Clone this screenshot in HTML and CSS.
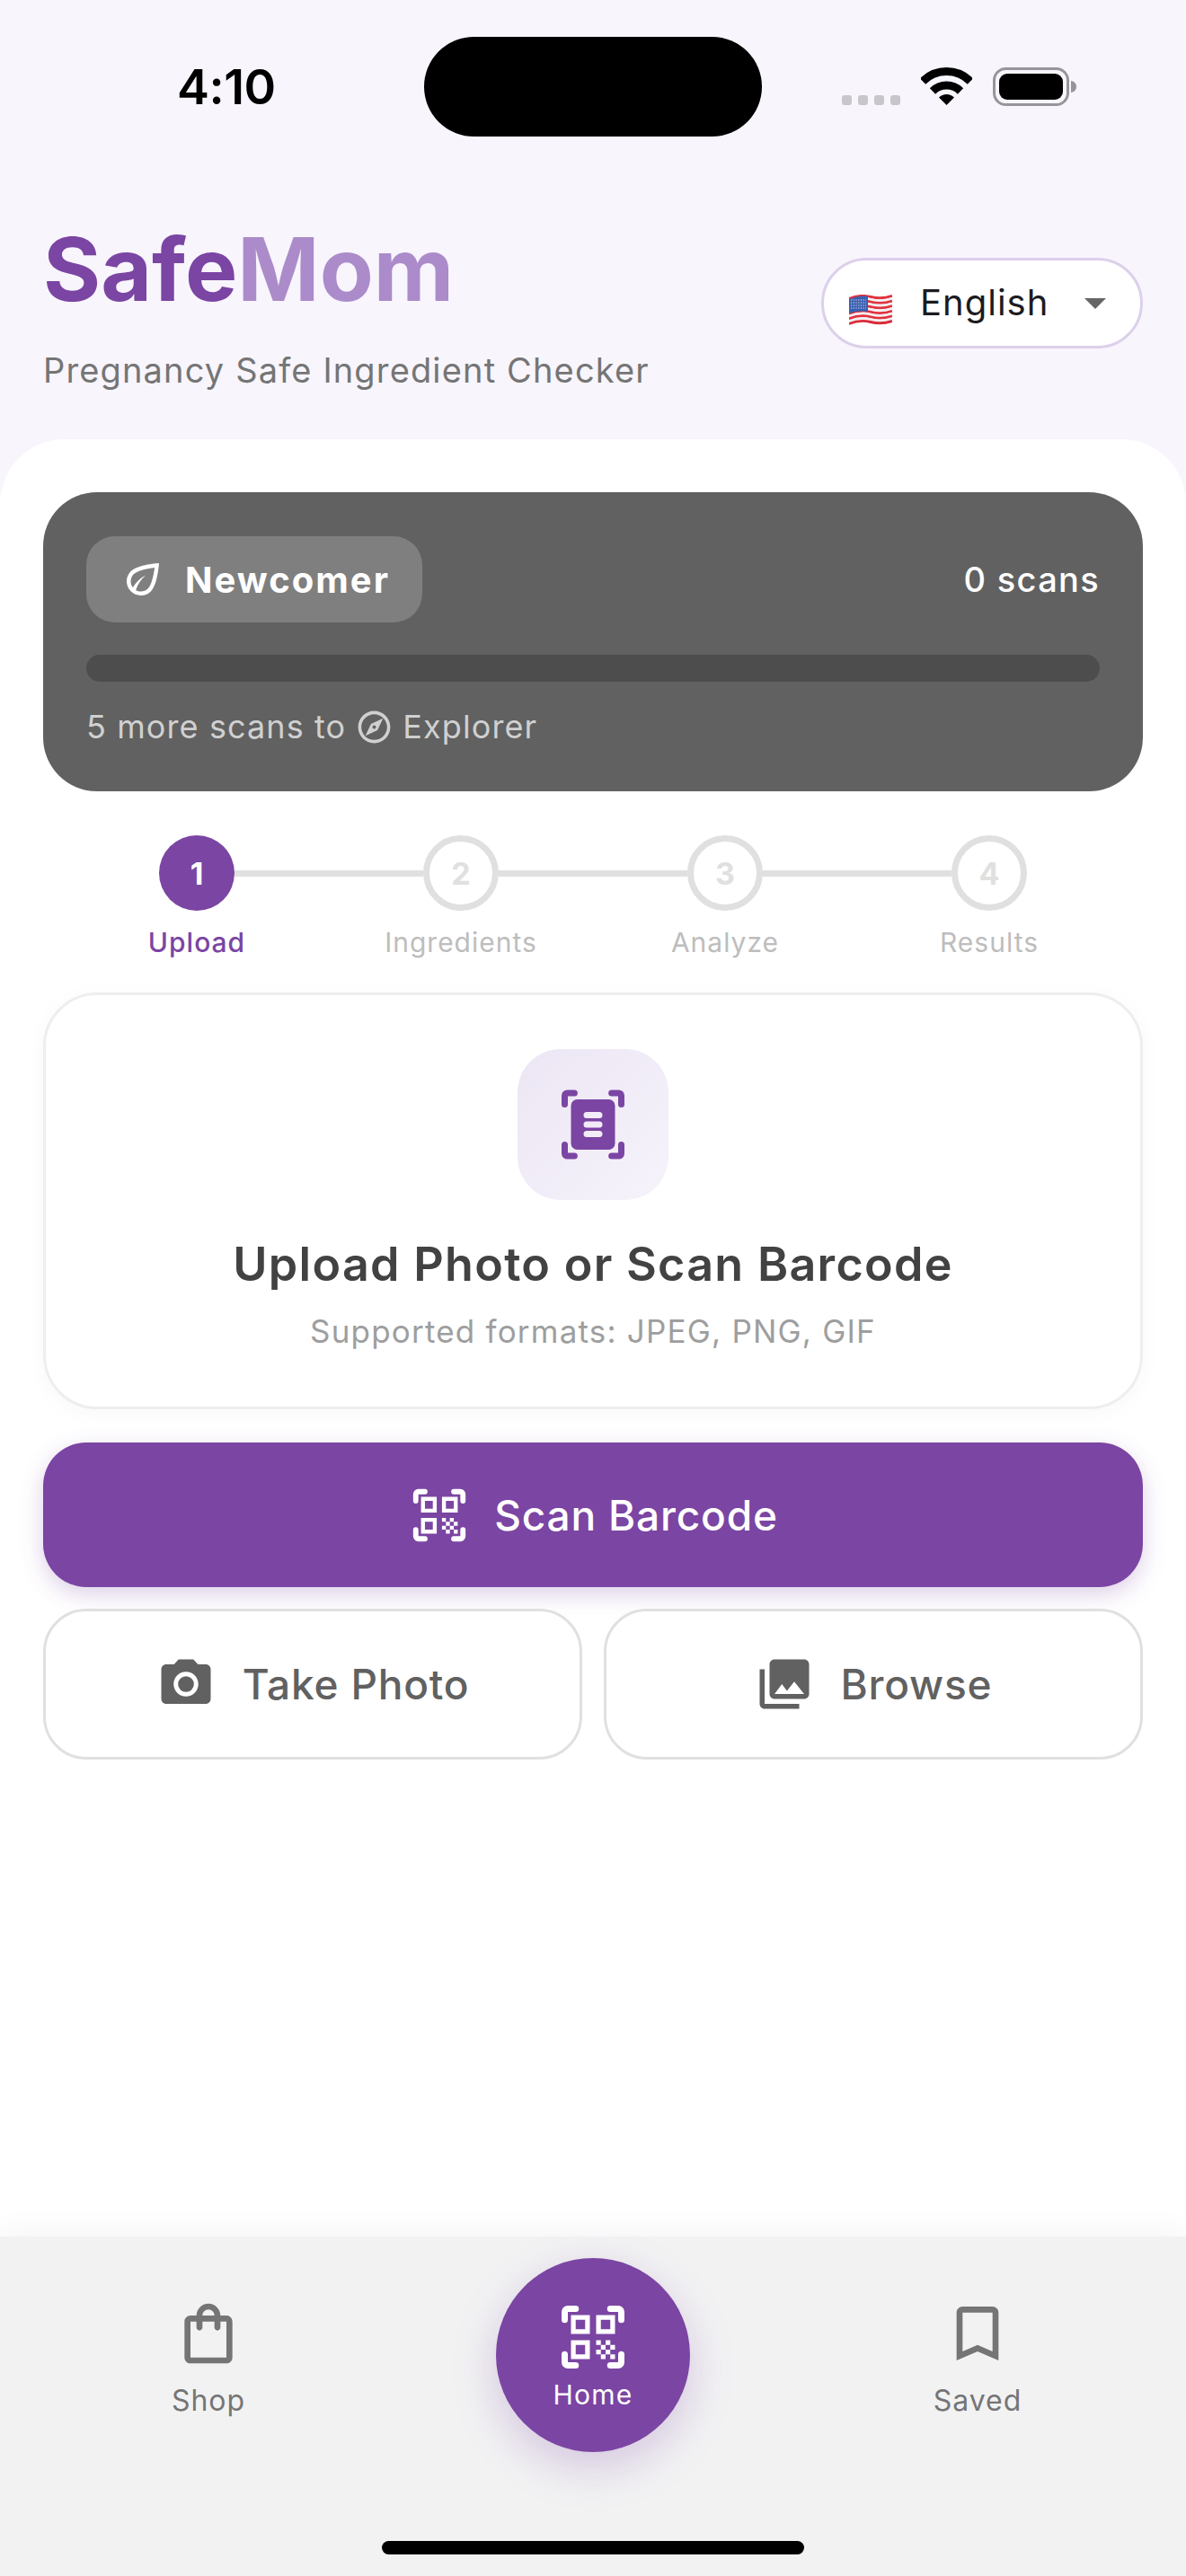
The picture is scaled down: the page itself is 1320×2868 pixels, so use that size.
FILE: index.html
```html
<!DOCTYPE html>
<html lang="en">
<head>
    <meta charset="utf-8">
    <title>SafeMom</title>
    <link rel="stylesheet" href="styles.css">
</head>
<body>
<div class="page">

    <div class="status-bar">
        <span class="time">4:10</span>
        <div class="island"></div>
        <div class="status-icons">
            <div class="signal"><i></i><i></i><i></i><i></i></div>
            <svg class="wifi" width="57" height="42" viewBox="0 0 57 42">
                <path d="M2 15.500a37.500 37.500 0 0 1 53 0" fill="none" stroke="#000" stroke-width="9"/>
                <path d="M13 26.500a22 22 0 0 1 31 0" fill="none" stroke="#000" stroke-width="9"/>
                <path d="M28.500 42L20 33.500a12 12 0 0 1 17 0z"/>
            </svg>
            <svg class="battery" width="93" height="43" viewBox="0 0 93 43">
                <rect x="1.500" y="1.500" width="82" height="40" rx="13" fill="none" stroke="#97959a" stroke-width="3"/>
                <rect x="7" y="7" width="71" height="29" rx="9"/>
                <path d="M87 15c3.500.5 6 3 6 6.500s-2.500 6-6 6.500z" fill="#97959a"/>
            </svg>
        </div>
    </div>

    <header class="app-header">
        <div class="brand">
            <h1 class="brand-name"><span class="safe">Safe</span><span class="mom">Mom</span></h1>
            <p class="tagline">Pregnancy Safe Ingredient Checker</p>
        </div>
        <div class="lang-select">
            <svg class="flag" width="48" height="36" viewBox="0 0 48 36">
                <g fill="none" stroke-width="2.900">
                    <path d="M0 4.500q12-5 24-2t24-1" stroke="#e0323f"/>
                    <path d="M0 7.300q12-5 24-2t24-1" stroke="#f4eff0"/>
                    <path d="M0 10.100q12-5 24-2t24-1" stroke="#e0323f"/>
                    <path d="M0 12.900q12-5 24-2t24-1" stroke="#f4eff0"/>
                    <path d="M0 15.700q12-5 24-2t24-1" stroke="#e0323f"/>
                    <path d="M0 18.500q12-5 24-2t24-1" stroke="#f4eff0"/>
                    <path d="M0 21.300q12-5 24-2t24-1" stroke="#e0323f"/>
                    <path d="M0 24.100q12-5 24-2t24-1" stroke="#f4eff0"/>
                    <path d="M0 26.900q12-5 24-2t24-1" stroke="#e0323f"/>
                    <path d="M0 29.700q12-5 24-2t24-1" stroke="#f4eff0"/>
                    <path d="M0 32.500q12-5 24-2t24-1" stroke="#d92c3a"/>
                </g>
                <path d="M0 5q11-4.500 21-3.300V19Q10 17.500 0 21z" fill="#3a5fb0"/>
                <path d="M2 6h17M2 9h17M2 12h17M2 15h17" stroke="#dfe6f6" stroke-width="1.100" stroke-dasharray="1.200 1.500"/>
            </svg>
            <span class="lang-name">English</span>
            <span class="caret"></span>
        </div>
    </header>

    <main class="sheet">
        <section class="rank-card">
            <div class="rank-top">
                <div class="rank-badge">
                    <svg width="54" height="54" viewBox="0 0 24 24" fill="#fff"><path d="M6.050 8.050c-2.730 2.730-2.730 7.150-.02 9.880C7.420 19.320 9.210 20 11 20s3.580-.68 4.950-2.050C19.430 14.470 20 4 20 4S9.530 4.570 6.050 8.050zm8.490 8.490c-.95.94-2.200 1.460-3.540 1.460-.89 0-1.730-.25-2.480-.68.92-2.880 2.620-5.410 4.880-7.320-2.630 1.360-4.840 3.460-6.370 6-1.480-1.960-1.350-4.750.44-6.540C9.210 7.720 14.040 6.650 17.800 6.200c-.45 3.760-1.520 8.590-3.260 10.340z"/></svg>
                    <span>Newcomer</span>
                </div>
                <span class="scan-count">0 scans</span>
            </div>
            <div class="progress"></div>
            <div class="next-rank">
                <span>5 more scans to</span>
                <svg width="43" height="43" viewBox="0 0 24 24" fill="#d0d0d0"><path d="M12 2C6.480 2 2 6.480 2 12s4.480 10 10 10 10-4.480 10-10S17.520 2 12 2zm0 18c-4.410 0-8-3.590-8-8s3.590-8 8-8 8 3.590 8 8-3.590 8-8 8zm-5.500-2.500l7.510-3.490L17.500 6.500 9.990 9.990 6.500 17.500zm5.500-6.600c.61 0 1.100.49 1.100 1.100s-.49 1.100-1.100 1.100-1.100-.49-1.100-1.100.49-1.100 1.100-1.100z"/></svg>
                <span>Explorer</span>
            </div>
        </section>

        <ol class="stepper">
            <li class="step active">
                <div class="step-track"><b class="seg none"></b><span class="dot">1</span><b class="seg"></b></div>
                <span class="step-label">Upload</span>
            </li>
            <li class="step">
                <div class="step-track"><b class="seg"></b><span class="dot">2</span><b class="seg"></b></div>
                <span class="step-label">Ingredients</span>
            </li>
            <li class="step">
                <div class="step-track"><b class="seg"></b><span class="dot">3</span><b class="seg"></b></div>
                <span class="step-label">Analyze</span>
            </li>
            <li class="step">
                <div class="step-track"><b class="seg"></b><span class="dot">4</span><b class="seg none"></b></div>
                <span class="step-label">Results</span>
            </li>
        </ol>

        <section class="upload-card">
            <div class="upload-tile">
                <svg width="84" height="84" viewBox="0 0 24 24">
                    <path d="M3 5.600V2.800a.8.8 0 0 1 .8-.8h2.300M17.900 2h2.300a.8.8 0 0 1 .8.8v2.800M3 18.400v2.800a.8.8 0 0 0 .8.8h2.300M17.900 22h2.300a.8.8 0 0 0 .8-.8v-2.800" fill="none" stroke="#7b45a3" stroke-width="2" stroke-linecap="round"/>
                    <rect x="5" y="4" width="14" height="16" rx="2" fill="#7b45a3"/>
                    <path d="M10 9h4M10 12h4M10 15h4" stroke="#f1ecf8" stroke-width="2" stroke-linecap="round"/>
                </svg>
            </div>
            <h2 class="upload-title">Upload Photo or Scan Barcode</h2>
            <p class="upload-sub">Supported formats: JPEG, PNG, GIF</p>
        </section>

        <button class="btn-scan">
            <svg width="70" height="70" viewBox="0 0 24 24" fill="#fff">
                <path d="M3 6.500V4a1 1 0 0 1 1-1h2.500M17.500 3H20a1 1 0 0 1 1 1v2.500M3 17.500V20a1 1 0 0 0 1 1h2.500M17.500 21H20a1 1 0 0 0 1-1v-2.500" fill="none" stroke="#fff" stroke-width="2" stroke-linecap="round"/>
                <path d="M9.500 6.500v3h-3v-3h3M11 5H5v6h6V5zm-1.500 9.500v3h-3v-3h3M11 13H5v6h6v-6zm6.500-6.500v3h-3v-3h3M19 5h-6v6h6V5zm-6 8h1.500v1.500H13V13zm1.500 1.500H16V16h-1.500v-1.500zM16 13h1.500v1.500H16V13zm-3 3h1.500v1.500H13V16zm1.500 1.500H16V19h-1.500v-1.500zM16 16h1.500v1.500H16V16zm1.500-1.500H19V16h-1.500v-1.500zm0 3H19V19h-1.500v-1.500z"/>
            </svg>
            <span>Scan Barcode</span>
        </button>

        <div class="btn-row">
            <button class="btn-outline">
                <svg width="66" height="66" viewBox="0 0 24 24" fill="#616161"><circle cx="12" cy="12" r="3.200"/><path d="M9 2L7.170 4H4c-1.100 0-2 .9-2 2v12c0 1.100.9 2 2 2h16c1.100 0 2-.9 2-2V6c0-1.100-.9-2-2-2h-3.170L15 2H9zm3 15c-2.760 0-5-2.240-5-5s2.240-5 5-5 5 2.240 5 5-2.240 5-5 5z"/></svg>
                <span>Take Photo</span>
            </button>
            <button class="btn-outline">
                <svg width="66" height="66" viewBox="0 0 24 24" fill="#616161"><path d="M22 16V4c0-1.100-.9-2-2-2H8c-1.100 0-2 .9-2 2v12c0 1.100.9 2 2 2h12c1.100 0 2-.9 2-2zm-11-4l2.030 2.710L16 11l4 5H8l3-4zM2 6v14c0 1.100.9 2 2 2h14v-2H4V6H2z"/></svg>
                <span>Browse</span>
            </button>
        </div>
    </main>

    <nav class="tab-bar">
        <div class="tab">
            <svg width="80" height="80" viewBox="0 0 24 24" fill="#757575"><path d="M18 6h-2c0-2.210-1.790-4-4-4S8 3.790 8 6H6c-1.100 0-2 .9-2 2v12c0 1.100.9 2 2 2h12c1.100 0 2-.9 2-2V8c0-1.100-.9-2-2-2zm-6-2c1.100 0 2 .9 2 2h-4c0-1.100.9-2 2-2zm6 16H6V8h2v2c0 .55.45 1 1 1s1-.45 1-1V8h4v2c0 .55.45 1 1 1s1-.45 1-1V8h2v12z"/></svg>
            <span class="tab-label">Shop</span>
        </div>
        <div class="tab tab-home">
            <div class="home-btn">
                <svg width="84" height="84" viewBox="0 0 24 24" fill="#fff">
                    <path d="M3 6.500V4a1 1 0 0 1 1-1h2.500M17.500 3H20a1 1 0 0 1 1 1v2.500M3 17.500V20a1 1 0 0 0 1 1h2.500M17.500 21H20a1 1 0 0 0 1-1v-2.500" fill="none" stroke="#fff" stroke-width="2" stroke-linecap="round"/>
                    <path d="M9.500 6.500v3h-3v-3h3M11 5H5v6h6V5zm-1.500 9.500v3h-3v-3h3M11 13H5v6h6v-6zm6.500-6.500v3h-3v-3h3M19 5h-6v6h6V5zm-6 8h1.500v1.500H13V13zm1.500 1.500H16V16h-1.500v-1.500zM16 13h1.500v1.500H16V13zm-3 3h1.500v1.500H13V16zm1.500 1.500H16V19h-1.500v-1.500zM16 16h1.500v1.500H16V16zm1.500-1.500H19V16h-1.500v-1.500zm0 3H19V19h-1.500v-1.500z"/>
                </svg>
                <span>Home</span>
            </div>
        </div>
        <div class="tab">
            <svg width="80" height="80" viewBox="0 0 24 24" fill="#757575"><path d="M17 3H7c-1.100 0-2 .9-2 2v16l7-3 7 3V5c0-1.100-.9-2-2-2zm0 15l-5-2.180L7 18V5h10v13z"/></svg>
            <span class="tab-label">Saved</span>
        </div>
        <div class="home-indicator"></div>
    </nav>

</div>
</body>
</html>
```

FILE: styles.css
```css
html, body {
    margin: 0;
    padding: 0;
    background: #f8f5fd;
}
body {
    font-family: Inter, "Noto Sans", sans-serif;
}
.page {
    width: 1320px;
    height: 2868px;
    display: flex;
    flex-direction: column;
    overflow: hidden;
}

/* status bar */
.status-bar {
    height: 111px;
    padding: 41px 0 0 197px;
    display: flex;
    align-items: center;
}
.time {
    width: 106px;
    font-size: 54px;
    font-weight: 600;
    letter-spacing: -0.5px;
    color: #000;
    white-space: nowrap;
}
.island {
    width: 376px;
    height: 111px;
    margin-left: 169px;
    border-radius: 56px;
    background: #000;
}
.status-icons {
    margin-left: 89px;
    height: 43px;
    display: flex;
    align-items: flex-end;
    gap: 23px;
}
.signal {
    display: flex;
    gap: 7px;
    height: 11px;
    margin-bottom: 1px;
}
.signal i {
    width: 11px;
    height: 11px;
    border-radius: 3px;
    background: #c8c6cb;
}
.wifi {
    margin-bottom: 1px;
}

/* header */
.app-header {
    height: 337px;
    padding: 0 48px;
    display: flex;
    justify-content: space-between;
    box-sizing: border-box;
}
.brand-name {
    margin: 90px 0 0;
    font-size: 98px;
    line-height: 116px;
    font-weight: 700;
}
.safe { color: #7b45a3; }
.mom { color: #ab8bc9; }
.tagline {
    margin: 31px 0 0;
    font-size: 38px;
    line-height: 46px;
    color: #757575;
    letter-spacing: 1.15px;
}
.lang-select {
    margin-top: 135px;
    width: 358px;
    height: 101px;
    box-sizing: border-box;
    padding-left: 28px;
    border: 3px solid #dcd0ea;
    border-radius: 51px;
    background: #fff;
    display: flex;
    align-items: center;
}
.flag {
    margin-top: 16px;
}
.lang-name {
    margin: 0 0 2px 31px;
    font-size: 40px;
    color: #1c1b1f;
    letter-spacing: 1px;
}
.caret {
    margin-left: 40px;
    border-left: 12px solid transparent;
    border-right: 12px solid transparent;
    border-top: 12px solid #666;
}

/* white sheet */
.sheet {
    flex: 1;
    padding: 59px 48px 0;
    background: #fff;
    border-radius: 72px 72px 0 0;
}
.rank-card {
    height: 333px;
    box-sizing: border-box;
    padding: 49px 48px 0;
    border-radius: 60px;
    background: #616161;
}
.rank-top {
    display: flex;
    justify-content: space-between;
    align-items: center;
}
.rank-badge {
    width: 374px;
    height: 96px;
    box-sizing: border-box;
    padding-left: 36px;
    border-radius: 32px;
    background: #7f7f7f;
    display: flex;
    align-items: center;
    gap: 20px;
    font-size: 40px;
    font-weight: 700;
    color: #fff;
    letter-spacing: 2px;
}
.scan-count {
    font-size: 38px;
    font-weight: 500;
    color: #fff;
    letter-spacing: 1.3px;
}
.progress {
    height: 30px;
    margin-top: 36px;
    border-radius: 15px;
    background: #4d4d4d;
}
.next-rank {
    margin-top: 29px;
    display: flex;
    align-items: center;
    gap: 10px;
    font-size: 36px;
    line-height: 43px;
    color: #d0d0d0;
    letter-spacing: 1.1px;
}

/* stepper */
.stepper {
    list-style: none;
    margin: 49px 24px 0;
    padding: 0;
    display: grid;
    grid-template-columns: repeat(4, 1fr);
}
.step {
    display: flex;
    flex-direction: column;
    align-items: center;
}
.step-track {
    width: 100%;
    display: flex;
    align-items: center;
}
.seg {
    flex: 1;
    height: 7px;
    background: #e0e0e0;
}
.seg.none {
    background: none;
}
.dot {
    width: 84px;
    height: 84px;
    box-sizing: border-box;
    border: 7px solid #e0e0e0;
    border-radius: 50%;
    display: flex;
    align-items: center;
    justify-content: center;
    font-size: 34px;
    font-weight: 700;
    color: #e0e0e0;
}
.step-label {
    margin-top: 16px;
    font-size: 30px;
    line-height: 38px;
    color: #bdbdbd;
    letter-spacing: 1px;
}
.active .dot {
    border: none;
    background: #7b45a3;
    color: #fff;
}
.active .step-label {
    color: #7b45a3;
    font-weight: 500;
}

/* upload card */
.upload-card {
    margin-top: 37px;
    height: 464px;
    box-sizing: border-box;
    padding-top: 60px;
    border: 3px solid #eeeeee;
    border-radius: 60px;
    box-shadow: 0 4px 24px rgba(0, 0, 0, 0.03);
    background: #fff;
    display: flex;
    flex-direction: column;
    align-items: center;
}
.upload-tile {
    width: 168px;
    height: 168px;
    border-radius: 48px;
    background: linear-gradient(135deg, #ece6f4, #f6f3fb);
    display: flex;
    align-items: center;
    justify-content: center;
}
.upload-title {
    margin: 42px 0 0;
    font-size: 52px;
    line-height: 60px;
    font-weight: 600;
    color: #424242;
    letter-spacing: 1.3px;
}
.upload-sub {
    margin: 23px 0 0;
    font-size: 35px;
    line-height: 42px;
    color: #9e9e9e;
    letter-spacing: 1.2px;
}

/* buttons */
button {
    font-family: inherit;
    cursor: pointer;
}
.btn-scan {
    width: 100%;
    height: 161px;
    margin-top: 37px;
    padding: 0;
    border: none;
    border-radius: 48px;
    background: #7b45a3;
    box-shadow: 0 8px 24px rgba(123, 69, 163, 0.25);
    display: flex;
    align-items: center;
    justify-content: center;
    gap: 26px;
    font-size: 46px;
    font-weight: 500;
    color: #fff;
    letter-spacing: 0.8px;
}
.btn-row {
    margin-top: 24px;
    display: flex;
    gap: 24px;
}
.btn-outline {
    flex: 1;
    height: 168px;
    padding: 0;
    border: 3px solid #e0e0e0;
    border-radius: 48px;
    background: #fff;
    display: flex;
    align-items: center;
    justify-content: center;
    gap: 30px;
    font-size: 46px;
    font-weight: 500;
    color: #616161;
    letter-spacing: 0.8px;
}

/* bottom nav */
.tab-bar {
    position: relative;
    height: 378px;
    box-sizing: border-box;
    padding: 24px 18px 0;
    background: #f2f2f3;
    box-shadow: 0 -8px 30px rgba(0, 0, 0, 0.04);
    display: grid;
    grid-template-columns: repeat(3, 1fr);
    align-items: start;
}
.tab {
    display: flex;
    flex-direction: column;
    align-items: center;
    padding-top: 44px;
}
.tab-label {
    margin-top: 15px;
    font-size: 32px;
    line-height: 40px;
    color: #757575;
    letter-spacing: 1px;
}
.tab-home {
    padding-top: 0;
}
.home-btn {
    width: 216px;
    height: 216px;
    box-sizing: border-box;
    padding-top: 46px;
    border-radius: 50%;
    background: #7b45a3;
    box-shadow: 0 16px 48px rgba(123, 69, 163, 0.25);
    display: flex;
    flex-direction: column;
    align-items: center;
    font-size: 30px;
    font-weight: 400;
    color: #fff;
    letter-spacing: 1.2px;
}
.home-btn span {
    margin-top: 4px;
}
.home-indicator {
    position: absolute;
    left: 425px;
    bottom: 24px;
    width: 470px;
    height: 15px;
    border-radius: 8px;
    background: #000;
}
```
